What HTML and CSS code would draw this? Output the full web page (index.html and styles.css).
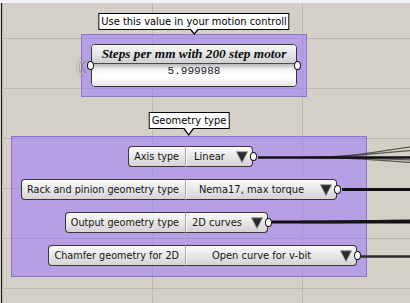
FILE: index.html
```html
<!DOCTYPE html>
<html>
<head>
<meta charset="utf-8">
<link rel="stylesheet" href="styles.css">
</head>
<body>
<div class="topbar"></div>
<div class="canvas">
  <div class="group group-motor">
    <div class="tip">Use this value in your motion controll</div>
    <div class="panel">
      <svg class="wireless" viewBox="0 0 14 20" width="14" height="20">
        <path d="M11 4 A7 7 0 0 0 11 16" />
        <path d="M8.5 2 A9.5 9.5 0 0 0 8.5 18" class="w2" />
        <path d="M6 0.5 A12 12 0 0 0 6 19.5" class="w3" />
      </svg>
      <span class="grip grip-in"></span>
      <div class="panel-title">Steps per mm with 200 step motor</div>
      <div class="panel-value">5.999988</div>
      <span class="grip grip-out"></span>
    </div>
  </div>

  <div class="group group-geom">
    <div class="tip tip-tall">Geometry type</div>
    <div class="vlist">
      <div class="vl-label">Axis type</div>
      <div class="vl-value w-axis"><span class="vl-text">Linear</span><svg class="arrow" viewBox="0 0 12 12"><polygon points="0.5,0.8 11.5,0.8 6,11.5"/></svg><span class="grip grip-out"></span></div>

      <div class="vl-label">Rack and pinion geometry type</div>
      <div class="vl-value w-rack"><span class="vl-text">Nema17, max torque</span><svg class="arrow" viewBox="0 0 12 12"><polygon points="0.5,0.8 11.5,0.8 6,11.5"/></svg><span class="grip grip-out"></span></div>

      <div class="vl-label">Output geometry type</div>
      <div class="vl-value w-output"><span class="vl-text">2D curves</span><svg class="arrow" viewBox="0 0 12 12"><polygon points="0.5,0.8 11.5,0.8 6,11.5"/></svg><span class="grip grip-out"></span></div>

      <div class="vl-label">Chamfer geometry for 2D</div>
      <div class="vl-value w-chamfer"><span class="vl-text">Open curve for v-bit</span><svg class="arrow" viewBox="0 0 12 12"><polygon points="0.5,0.8 11.5,0.8 6,11.5"/></svg><span class="grip grip-out"></span></div>
    </div>
  </div>

  <svg class="wires" viewBox="2 3 408 300" width="408" height="300">
    <path class="fan" d="M300 157.5 C360 157.5 380 150 412 147" />
    <path class="fan" d="M300 157.5 C360 157.5 380 152 412 150.5" />
    <path class="fan" d="M300 157.5 C360 157.5 380 159 412 160" />
    <path class="fan" d="M300 157.5 C360 157.5 380 161 412 162.5" />
    <path class="wire" d="M258 157.5 H412" />
    <path class="wire w-thick" d="M342 189.5 H412" />
    <path class="wire w-thick" d="M272 222 H412" />
    <path class="wire w-thick2" d="M300 222 C340 222 370 221 412 220.8" />
    <path class="wire w-gray" d="M361 256.5 H412" />
  </svg>
</div>
</body>
</html>
```
FILE: styles.css
```css
* { box-sizing: border-box; }
html, body { margin: 0; padding: 0; }
body {
  width: 410px;
  height: 303px;
  overflow: hidden;
  background: #d4d0c8;
  font-family: "DejaVu Sans Condensed", "Liberation Sans", sans-serif;
}
.topbar { height: 3px; background: #f2f2f2; }
.canvas {
  position: relative;
  margin-left: 1px;
  border-left: 1px solid #1c1c1c;
  height: 300px;
  background-color: #d4d0c8;
  background-image:
    repeating-linear-gradient(to bottom, transparent 0 35px, #bdb9b1 35px 36px, transparent 36px 50px),
    repeating-linear-gradient(to right, #bdb9b1 0 1px, transparent 1px 150px);
}
.group {
  position: absolute;
  background: rgba(160, 124, 250, 0.58);
  border: 1px solid rgba(110, 80, 190, 0.55);
  padding: 9px;
}
.group-motor { left: 79px; top: 31px; width: 226px; height: 63px; }
.group-geom { left: 9px; top: 133px; width: 356px; height: 141px; }

.tip {
  position: absolute;
  left: 50%;
  transform: translateX(-50%);
  bottom: calc(100% + 5px);
  background: #fff;
  border: 1px solid #000;
  font-size: 11px;
  line-height: 15px;
  padding: 0 2px;
  white-space: nowrap;
  color: #000;
}
.tip::before, .tip::after {
  content: "";
  position: absolute;
  left: 50%;
  width: 0; height: 0;
}
.tip::before {
  top: 100%;
  margin-left: -5px;
  border-left: 5px solid transparent;
  border-right: 5px solid transparent;
  border-top: 6px solid #000;
}
.tip::after {
  top: calc(100% - 1px);
  margin-left: -4px;
  border-left: 4px solid transparent;
  border-right: 4px solid transparent;
  border-top: 5px solid #fff;
}
.tip-tall { bottom: calc(100% + 8px); }
.tip-tall::before { margin-left: -6px; border-left-width: 6px; border-right-width: 6px; border-top-width: 8px; }
.tip-tall::after { margin-left: -5px; border-left-width: 5px; border-right-width: 5px; border-top-width: 7px; }

.panel {
  position: relative;
  height: 43px;
  border: 1px solid #363636;
  border-radius: 4px;
  background: #fff;
}
.panel-title {
  height: 19px;
  border-bottom: 1px solid #4a4a4a;
  background: linear-gradient(#f8f8f8, #d0d0d0);
  border-radius: 3px 3px 0 0;
  font: italic bold 13.3px "Liberation Serif", serif;
  text-align: center;
  line-height: 17px;
  color: #0d0d0d;
  white-space: nowrap;
}
.panel-value {
  height: 22px;
  background: linear-gradient(#b4b4b4 0, #f2f2f2 5px, #fff 9px, #fff 14px, #e4e4e4 100%);
  border-radius: 0 0 3px 3px;
  font: 11px "Liberation Mono", monospace;
  text-align: center;
  line-height: 15px;
  color: #1a1a2a;
}
.wireless {
  position: absolute;
  left: -17px;
  top: 50%;
  margin-top: -9px;
  fill: none;
  stroke: #8e8b86;
  stroke-width: 1.1;
}
.wireless .w2 { stroke: #a7a39d; }
.wireless .w3 { stroke: #bebab3; }

.grip {
  position: absolute;
  top: 50%;
  width: 7px;
  height: 9px;
  margin-top: -4.5px;
  background: #fff;
  border: 1.5px solid #161616;
  border-radius: 50%;
  z-index: 2;
}
.grip-out { right: -5px; }
.grip-in { left: -5px; }

.vlist {
  display: grid;
  grid-template-columns: 164px auto;
  justify-content: start;
  row-gap: 12px;
}
.vl-label, .vl-value {
  height: 21px;
  border: 1px solid #383838;
  background: linear-gradient(#fbfbfb, #d3d3d3);
  font-size: 11px;
  color: #141414;
  white-space: nowrap;
}
.vl-label {
  justify-self: end;
  border-right: 0;
  border-radius: 4px 0 0 4px;
  padding: 0 6px 0 5px;
  line-height: 19px;
  font-size: 10.75px;
}
.vl-value {
  justify-self: start;
  position: relative;
  display: flex;
  align-items: center;
  border-left: 1px solid #a6a6a6;
  box-shadow: inset 1px 0 #f8f8f8;
  border-radius: 0 4px 4px 0;
  padding-right: 4px;
}
.vl-text { flex: 1; text-align: center; padding-right: 3px; line-height: 19px; }
.arrow {
  width: 12px;
  height: 12px;
  fill: #2b2b2b;
  stroke: #8a8a8a;
  stroke-width: 0.8;
}
.w-axis { width: 68px; }
.w-rack { width: 152px; }
.w-output { width: 83px; }
.w-chamfer { width: 172px; }

.wires {
  position: absolute;
  left: 0;
  top: 0;
  fill: none;
  pointer-events: none;
  z-index: 1;
}
.wire { stroke: #101010; stroke-width: 2.6; }
.w-thick { stroke-width: 3.2; }
.w-thick2 { stroke: #151515; stroke-width: 2.6; }
.w-gray { stroke: #2c2c2c; stroke-width: 2.6; }
.fan { stroke: #3a3a3a; stroke-width: 1.2; opacity: 0.8; }
```
